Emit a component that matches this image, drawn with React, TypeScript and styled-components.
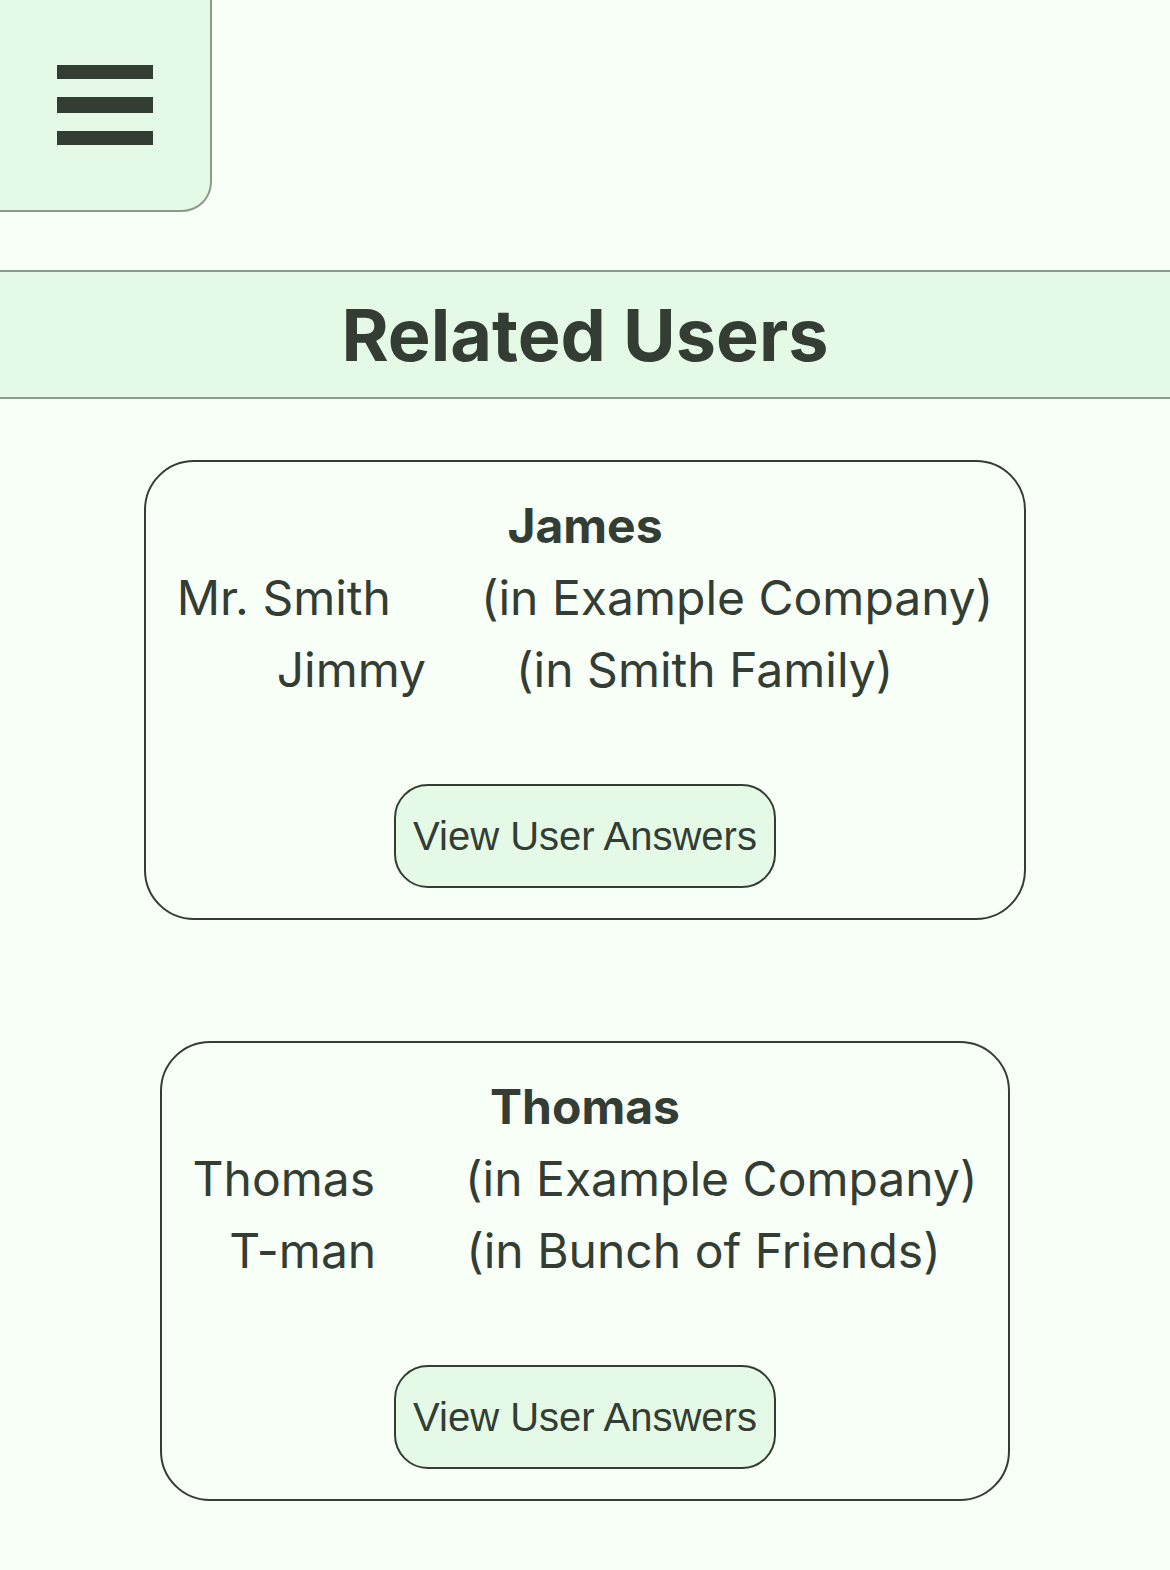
import React from "react";
import styled, { createGlobalStyle } from "styled-components";

const GlobalStyle = createGlobalStyle`
  html, body {
    margin: 0;
    padding: 0;
    background: #f7fff7;
  }
  body {
    font-family: Inter, "Noto Sans", sans-serif;
    color: #343d33;
  }
`;

const Page = styled.div`
  display: flex;
  flex-direction: column;
  min-height: 1570px;
  background: #f7fff7;
`;

const TopBar = styled.div`
  display: flex;
  height: 212px;
`;

const MenuButton = styled.button`
  width: 212px;
  height: 212px;
  box-sizing: border-box;
  background: #e5fae6;
  border: none;
  border-right: 2px solid #8b9b8a;
  border-bottom: 2px solid #8b9b8a;
  border-bottom-right-radius: 30px;
  display: flex;
  flex-direction: column;
  align-items: center;
  justify-content: center;
  gap: 18px;
  padding: 0;
  cursor: pointer;
`;

const Bar = styled.span<{ $h: number }>`
  display: block;
  width: 96px;
  height: ${(p) => p.$h}px;
  background: #343d33;
`;

const Header = styled.header`
  margin-top: 58px;
  background: #e5fae6;
  border-top: 2px solid #8b9b8a;
  border-bottom: 2px solid #8b9b8a;
  display: flex;
  justify-content: center;
  padding: 19px 0 19px;
`;

const Title = styled.h1`
  margin: 0;
  font-family: Inter, "Noto Sans", sans-serif;
  font-weight: 700;
  font-size: 72px;
  line-height: 87px;
  color: #343d33;
`;

const CardList = styled.main`
  display: flex;
  flex-direction: column;
  align-items: center;
`;

const Card = styled.section`
  margin: 61px auto 60px;
  box-sizing: border-box;
  border: 2px solid #343d33;
  border-radius: 50px;
  padding: 28px 31px 30px;
  display: flex;
  flex-direction: column;
  align-items: center;
`;

const Name = styled.div`
  font-weight: 700;
  font-size: 48px;
  line-height: 72px;
`;

const AliasRow = styled.div`
  display: flex;
  justify-content: center;
  gap: 90px;
  font-size: 48px;
  line-height: 72px;
  font-weight: 400;
`;

const Spacer = styled.div`
  height: 78px;
`;

const AnswersButton = styled.button`
  font-family: "Liberation Sans", Arial, sans-serif;
  font-size: 40px;
  line-height: 46px;
  color: #343d33;
  background: #e5fae6;
  border: 2px solid #343d33;
  border-radius: 34px;
  padding: 27px 17px;
  cursor: pointer;
`;

type Alias = { alias: string; group: string };
type User = { name: string; aliases: Alias[] };

const users: User[] = [
  {
    name: "James",
    aliases: [
      { alias: "Mr. Smith", group: "(in Example Company)" },
      { alias: "Jimmy", group: "(in Smith Family)" },
    ],
  },
  {
    name: "Thomas",
    aliases: [
      { alias: "Thomas", group: "(in Example Company)" },
      { alias: "T-man", group: "(in Bunch of Friends)" },
    ],
  },
];

export default function App() {
  return (
    <>
      <GlobalStyle />
      <Page>
        <TopBar>
          <MenuButton aria-label="Menu">
            <Bar $h={14} />
            <Bar $h={16} />
            <Bar $h={14} />
          </MenuButton>
        </TopBar>
        <Header>
          <Title>Related Users</Title>
        </Header>
        <CardList>
          {users.map((u) => (
            <Card key={u.name}>
              <Name>{u.name}</Name>
              {u.aliases.map((a) => (
                <AliasRow key={a.alias}>
                  <span>{a.alias}</span>
                  <span>{a.group}</span>
                </AliasRow>
              ))}
              <Spacer />
              <AnswersButton>View User Answers</AnswersButton>
            </Card>
          ))}
        </CardList>
      </Page>
    </>
  );
}
